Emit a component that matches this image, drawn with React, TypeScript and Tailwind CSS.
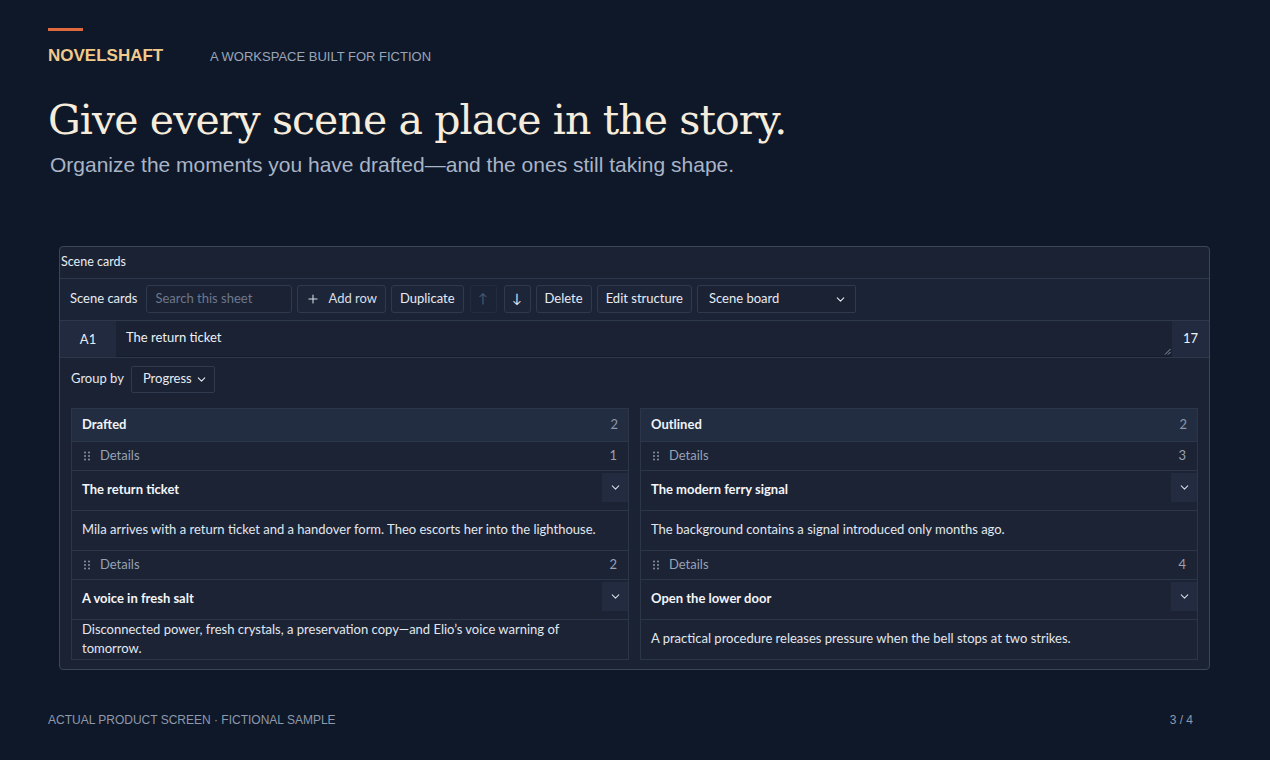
import { ChevronDown, Plus } from 'lucide-react';

const ui = { fontFamily: 'Lato, "Liberation Sans", sans-serif' };

type Scene = { n: number; title: string; body: string };

const columns: { name: string; scenes: Scene[] }[] = [
  {
    name: 'Drafted',
    scenes: [
      { n: 1, title: 'The return ticket', body: 'Mila arrives with a return ticket and a handover form. Theo escorts her into the lighthouse.' },
      { n: 2, title: 'A voice in fresh salt', body: 'Disconnected power, fresh crystals, a preservation copy\u2014and Elio\u2019s voice warning of tomorrow.' },
    ],
  },
  {
    name: 'Outlined',
    scenes: [
      { n: 3, title: 'The modern ferry signal', body: 'The background contains a signal introduced only months ago.' },
      { n: 4, title: 'Open the lower door', body: 'A practical procedure releases pressure when the bell stops at two strikes.' },
    ],
  },
];

function Grip() {
  return (
    <svg width="8" height="10" viewBox="0 0 8 10" className="text-[#8a94a6]">
      {[1.5, 5, 8.5].map((y) => (
        <g key={y}>
          <circle cx="2" cy={y} r="1" fill="currentColor" />
          <circle cx="6" cy={y} r="1" fill="currentColor" />
        </g>
      ))}
    </svg>
  );
}

function Btn({ children, dim }: { children: React.ReactNode; dim?: boolean }) {
  return (
    <div
      className={`flex h-[28px] items-center rounded-[3px] border border-[#2f3a4f] bg-[#1d2639] px-[8px] text-[13px] ${
        dim ? 'text-[#5d687b]' : 'text-[#e7ebf2]'
      }`}
    >
      {children}
    </div>
  );
}

function Card({ scene }: { scene: Scene }) {
  return (
    <div className="border-t border-[#2c3649]">
      <div className="flex h-[28px] items-center justify-between px-[10px] text-[13px] text-[#98a2b3]">
        <div className="flex items-center gap-[9px] pl-[1px]">
          <Grip />
          <span>Details</span>
        </div>
        <span className="pr-[1px]">{scene.n}</span>
      </div>
      <div className="flex h-[40px] items-center justify-between border-t border-[#2c3649] pl-[10px]">
        <span className="text-[13px] font-bold text-[#f3f5f9]">{scene.title}</span>
        <div className="flex h-[29px] w-[26px] items-center justify-center self-start mt-[2px] bg-[#222b3f] text-[#d4dae4]">
          <ChevronDown size={13} strokeWidth={2} />
        </div>
      </div>
      <div className="flex h-[40px] items-center border-t border-[#2c3649] px-[10px] text-[13px] text-[#e2e7ef]">
        {scene.body}
      </div>
    </div>
  );
}

export default function App() {
  return (
    <div className="min-h-screen w-full bg-[#0f1829] pl-[48px] pt-[28px]" style={{ height: 760 }}>
      <div className="h-[3px] w-[35px] bg-[#e0683f]" />
      <div className="mt-[14px] flex items-center" style={{ fontFamily: '"Liberation Sans", Arial, sans-serif' }}>
        <span className="w-[162px] text-[17px] font-bold leading-[20px] text-[#f2c98c]">NOVELSHAFT</span>
        <span className="pt-[2px] text-[13px] text-[#9aa5b8]">A WORKSPACE BUILT FOR FICTION</span>
      </div>
      <h1
        className="mt-[26px] text-[46px] leading-[54px] text-[#f6ecdc]"
        style={{ fontFamily: '"DejaVu Serif", Georgia, serif', letterSpacing: '-0.9px', fontSize: 41 }}
      >
        Give every scene a place in the story.
      </h1>
      <p
        className="mt-[5px] pl-[2px] text-[21px] leading-[26px] text-[#a9b4c6]"
        style={{ fontFamily: '"Liberation Sans", Arial, sans-serif' }}
      >
        Organize the moments you have drafted—and the ones still taking shape.
      </p>

      <div
        className="ml-[11px] mt-[68px] w-[1151px] overflow-hidden rounded-[4px] border border-[#3a4559] bg-[#1a2234]"
        style={ui}
      >
        <div className="flex h-[32px] items-center border-b border-[#2e384b] pl-[1px] text-[12.5px] text-[#e9edf3]">
          Scene cards
        </div>
        <div className="flex h-[42px] items-center gap-[5px] border-b border-[#2e384b] bg-[#1b2437] px-[10px]">
          <span className="mr-[4px] text-[13px] text-[#e7ebf2]">Scene cards</span>
          <div className="flex h-[28px] w-[146px] items-center rounded-[3px] border border-[#2f3a4f] bg-[#1a2234] px-[8px] text-[13px] text-[#6d788b]">
            Search this sheet
          </div>
          <Btn>
            <Plus size={14} strokeWidth={1.8} className="mr-[8px] text-[#d8dde6]" />
            <span className="text-[#d8dde6]">Add row</span>
          </Btn>
          <Btn>Duplicate</Btn>
          <div className="ml-[1px] flex h-[28px] w-[27px] items-center justify-center rounded-[3px] border border-[#232d40] text-[13px] text-[#4f5a6d]">
            ↑
          </div>
          <div className="ml-[2px] flex h-[28px] w-[27px] items-center justify-center rounded-[3px] border border-[#2f3a4f] bg-[#1d2639] text-[13px] text-[#e7ebf2]">
            ↓
          </div>
          <Btn>Delete</Btn>
          <Btn>Edit structure</Btn>
          <div className="flex h-[28px] w-[159px] items-center justify-between rounded-[2px] border border-[#2f3a4f] bg-[#1a2234] pl-[11px] pr-[8px] text-[13px] text-[#e7ebf2]">
            <span>Scene board</span>
            <ChevronDown size={13} strokeWidth={2} />
          </div>
        </div>
        <div className="flex h-[37px] border-b border-[#2e384b]">
          <div className="flex w-[56px] items-center justify-center bg-[#212a3e] pt-[2px] text-[13px] text-[#e7ebf2]">A1</div>
          <div className="relative flex-1 border-b border-[#141b2a] pl-[10px] pt-[7px] text-[13px] text-[#eef1f6]">
            The return ticket
            <svg className="absolute bottom-[1px] right-[1px]" width="7" height="7" viewBox="0 0 7 7">
              <path d="M6.5 1 L1 6.5 M6.5 4 L4 6.5" stroke="#8b95a6" strokeWidth="1" />
            </svg>
          </div>
          <div className="flex w-[37px] items-center justify-center bg-[#212a3e] text-[13px] text-[#eef1f6]">17</div>
        </div>
        <div className="flex h-[43px] items-center gap-[7px] pl-[11px]">
          <span className="text-[13px] text-[#e3e8ef]">Group by</span>
          <div className="flex h-[27px] w-[84px] items-center justify-between rounded-[2px] border border-[#2f3a4f] bg-[#1a2234] pl-[11px] pr-[6px] text-[13px] text-[#e7ebf2]">
            <span>Progress</span>
            <ChevronDown size={13} strokeWidth={2} />
          </div>
        </div>
        <div className="mt-[7px] grid grid-cols-2 gap-[11px] px-[11px] pb-[9px]">
          {columns.map((col) => (
            <div key={col.name} className="border border-[#2c3649] bg-[#1b2335]">
              <div className="flex h-[32px] items-center justify-between bg-[#232d42] px-[10px]">
                <span className="text-[13px] font-bold text-[#f0f3f8]">{col.name}</span>
                <span className="text-[13px] text-[#8d97a8]">{col.scenes.length}</span>
              </div>
              {col.scenes.map((s) => (
                <Card key={s.n} scene={s} />
              ))}
            </div>
          ))}
        </div>
      </div>

      <div
        className="mt-[41px] flex w-[1145px] items-center justify-between text-[12px] text-[#8e99ab]"
        style={{ fontFamily: '"Liberation Sans", Arial, sans-serif' }}
      >
        <span>ACTUAL PRODUCT SCREEN · FICTIONAL SAMPLE</span>
        <span>3 / 4</span>
      </div>
    </div>
  );
}
